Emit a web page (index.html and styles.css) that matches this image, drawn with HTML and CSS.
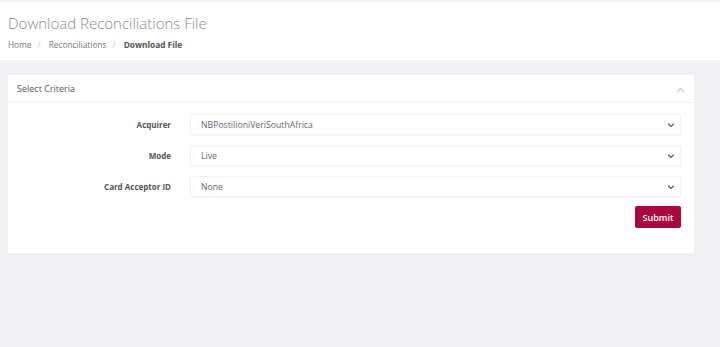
FILE: index.html
```html
<!DOCTYPE html>
<html>
<head>
<meta charset="utf-8">
<link rel="stylesheet" href="styles.css">
</head>
<body>
<header class="page-head">
  <h1 class="title">Download Reconciliations File</h1>
  <nav class="crumbs">
    <span class="crumb">Home</span><span class="sep">/</span>
    <span class="crumb">Reconciliations</span><span class="sep">/</span>
    <span class="crumb active">Download File</span>
  </nav>
</header>
<main class="main">
  <section class="card">
    <div class="card-head">
      <span class="card-title">Select Criteria</span>
      <svg class="collapse" width="9" height="6" viewBox="0 0 9 6"><path d="M1 5 L4.5 1.5 L8 5" fill="none" stroke="#c4c4c4" stroke-width="1.2"/></svg>
    </div>
    <div class="card-body">
      <div class="row">
        <label class="label">Acquirer</label>
        <div class="select"><span>NBPostilioniVeriSouthAfrica</span><svg width="8" height="6" viewBox="0 0 8 6"><path d="M1.2 1.8 L4 4.4 L6.8 1.8" fill="none" stroke="#555" stroke-width="1.2"/></svg></div>
      </div>
      <div class="row">
        <label class="label">Mode</label>
        <div class="select"><span>Live</span><svg width="8" height="6" viewBox="0 0 8 6"><path d="M1.2 1.8 L4 4.4 L6.8 1.8" fill="none" stroke="#555" stroke-width="1.2"/></svg></div>
      </div>
      <div class="row">
        <label class="label">Card Acceptor ID</label>
        <div class="select"><span>None</span><svg width="8" height="6" viewBox="0 0 8 6"><path d="M1.2 1.8 L4 4.4 L6.8 1.8" fill="none" stroke="#555" stroke-width="1.2"/></svg></div>
      </div>
      <div class="actions">
        <button class="btn">Submit</button>
      </div>
    </div>
  </section>
</main>
</body>
</html>
```

FILE: styles.css
```css
html, body {
  margin: 0;
  padding: 0;
}
body {
  background: #f1f1f3;
  font-family: "Open Sans", "Noto Sans", sans-serif;
  height: 347px;
  overflow: hidden;
}
.page-head {
  background: #fff;
  height: 60px;
  box-sizing: border-box;
  padding: 11px 8px 0 8px;
  border-top: 2px solid #f3f3f3;
}
.title {
  margin: 0;
  font-size: 15px;
  font-weight: 300;
  line-height: 20px;
  color: #8a8a8a;
}
.crumbs {
  margin-top: 6px;
  font-size: 8.3px;
  line-height: 12px;
  color: #777;
}
.sep {
  color: #ccc;
  margin: 0 6px;
}
.crumb.active {
  font-weight: 700;
  color: #555;
}
.main {
  padding: 15px 26px 0 8px;
}
.card {
  background: #fff;
  width: 686px;
}
.card-head {
  height: 28px;
  box-sizing: border-box;
  border-bottom: 1px solid #f0f0f0;
  display: flex;
  align-items: center;
  justify-content: space-between;
  padding: 0 9px 0 9px;
}
.card-title {
  font-size: 9px;
  color: #555;
}
.collapse {
  margin-top: 3px;
}
.card-body {
  padding: 11px 13px 25px 0;
  display: flex;
  flex-direction: column;
  gap: 10px;
}
.row {
  display: flex;
  align-items: center;
  gap: 19px;
}
.label {
  width: 163px;
  text-align: right;
  font-size: 8px;
  font-weight: 700;
  color: #555;
}
.select {
  flex: 1;
  height: 21px;
  box-sizing: border-box;
  border: 1px solid #f2f2f2;
  box-shadow: 0 1px 2px rgba(0,0,0,0.04);
  border-radius: 2px;
  display: flex;
  align-items: center;
  justify-content: space-between;
  padding: 0 5px 0 10px;
  font-size: 8.7px;
  color: #666;
}
.actions {
  display: flex;
  justify-content: flex-end;
  margin-top: -1px;
}
.btn {
  width: 46px;
  height: 22px;
  background: #a8083c;
  color: #fff;
  border: none;
  border-radius: 2px;
  font-family: "Open Sans", "Noto Sans", sans-serif;
  font-size: 9px;
  font-weight: 600;
  padding: 0;
}
```
